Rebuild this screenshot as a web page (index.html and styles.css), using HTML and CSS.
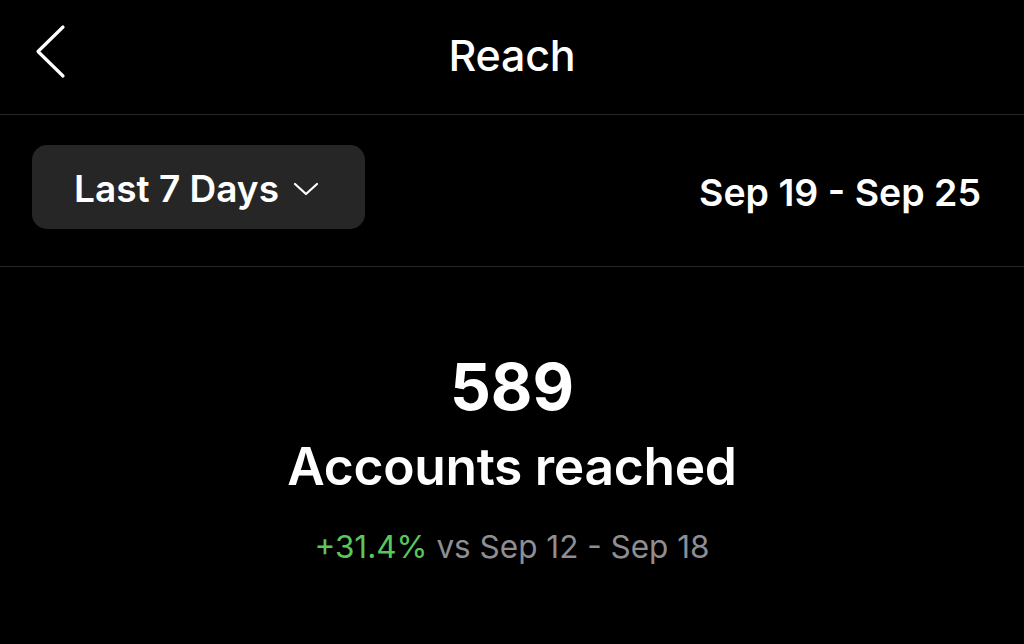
FILE: index.html
```html
<!DOCTYPE html>
<html>
<head>
<meta charset="utf-8">
<link rel="stylesheet" href="styles.css">
</head>
<body>
<div class="screen">
  <header class="nav">
    <button class="back" aria-label="Back">
      <svg width="34" height="56" viewBox="0 0 34 56"><path d="M30 3 L5 27.5 L30 52" fill="none" stroke="#fff" stroke-width="3.2" stroke-linecap="round" stroke-linejoin="round"/></svg>
    </button>
    <h1 class="title">Reach</h1>
  </header>
  <section class="filter">
    <button class="range">
      <span>Last 7 Days</span>
      <svg width="26" height="16" viewBox="0 0 26 16"><path d="M2 3 L13 13 L24 3" fill="none" stroke="#fff" stroke-width="2.2" stroke-linecap="round" stroke-linejoin="round"/></svg>
    </button>
    <div class="dates">Sep 19 - Sep 25</div>
  </section>
  <section class="summary">
    <div class="count">589</div>
    <div class="label">Accounts reached</div>
    <div class="compare"><span class="up">+31.4%</span> vs Sep 12 - Sep 18</div>
  </section>
</div>
</body>
</html>
```
FILE: styles.css
```css
* { box-sizing: border-box; }
html, body { margin: 0; padding: 0; background: #000; }
body { font-family: Inter, "Noto Sans", "Liberation Sans", sans-serif; color: #fff; }
.screen { width: 1024px; height: 644px; overflow: hidden; background: #000; }
.nav {
  height: 115px;
  display: flex;
  align-items: center;
  justify-content: center;
  position: relative;
  border-bottom: 1.5px solid #282828;
}
.back {
  position: absolute;
  left: 33px;
  top: 24px;
  background: none;
  border: 0;
  padding: 0;
  display: flex;
}
.title { margin: 0; font-size: 43px; font-weight: 500; letter-spacing: -0.2px; padding-bottom: 4px; }
.filter {
  height: 152px;
  display: flex;
  align-items: center;
  justify-content: space-between;
  padding: 0 43px 0 32px;
  border-bottom: 1.5px solid #282828;
}
.range {
  width: 333px;
  height: 84px;
  border-radius: 15px;
  background: #262626;
  border: 0;
  color: #fff;
  display: flex;
  align-items: center;
  gap: 14px;
  padding: 4px 0 0 42px;
  font-family: inherit;
  font-size: 37px;
  font-weight: 600;
  margin-top: -8px;
}
.range svg { margin-top: 0; }
.dates { font-size: 37.5px; font-weight: 600; margin-top: 4px; }
.summary {
  display: flex;
  flex-direction: column;
  align-items: center;
  padding-top: 82px;
}
.count { font-size: 64px; font-weight: 700; line-height: 76px; }
.label { font-size: 51.5px; font-weight: 600; line-height: 66px; margin-top: 8px; letter-spacing: -0.3px; }
.compare { font-size: 31.5px; color: #8e8e93; margin-top: 28px; }
.up { color: #5ac75a; }
```
